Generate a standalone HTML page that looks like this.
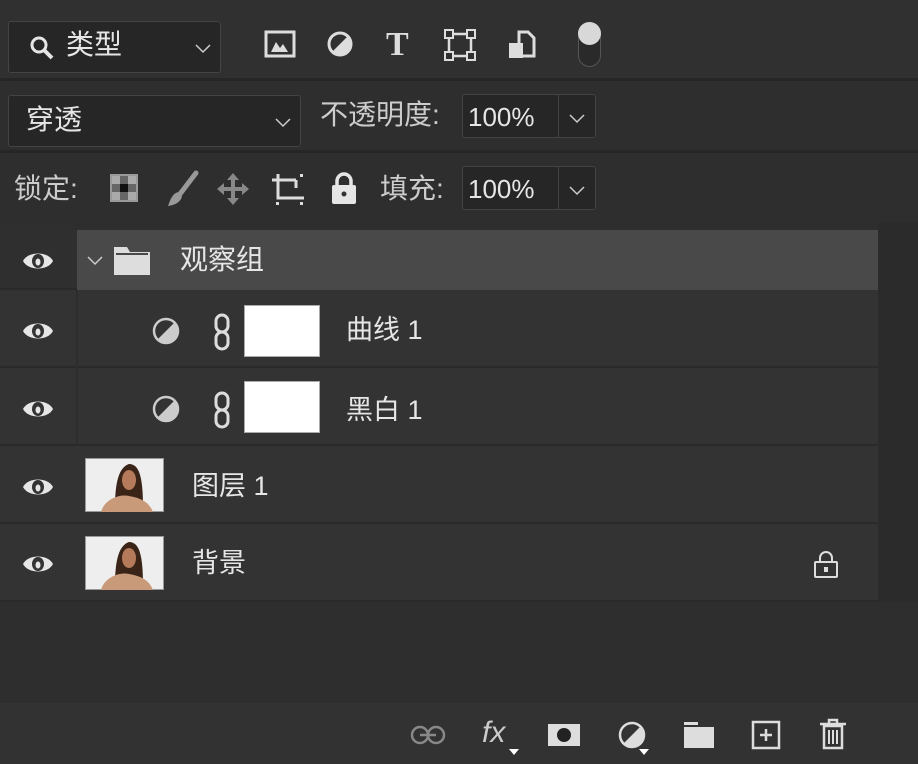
<!DOCTYPE html><html><head><meta charset="utf-8"><style>
*{margin:0;padding:0;box-sizing:border-box}
body{width:918px;height:764px;background:#2e2e2e;position:relative;overflow:hidden;font-family:"Liberation Sans","Noto Sans CJK SC",sans-serif;color:#e6e6e6}
.a{position:absolute}
.box{position:absolute;background:#262626;border:1px solid #444;border-radius:3px}
.t{position:absolute;font-size:26px;line-height:1;white-space:nowrap}
.sep{position:absolute;left:0;width:918px;height:3px;background:#262626}
.row{position:absolute;left:0;width:878px;background:#333;border-bottom:2px solid #2a2a2a}
.eye{position:absolute;left:22px;width:32px;height:22px}
.thumb{position:absolute;width:76px;height:52px;background:#fff;border:1px solid #aaa}
</style></head><body>
<div class="a" style="left:0;top:0;width:918px;height:78px;background:#303030"></div>
<div class="box" style="left:8px;top:21px;width:213px;height:52px"></div>
<svg class="a" style="left:28px;top:34px" width="28" height="28" viewBox="0 0 28 28"><circle cx="11" cy="11" r="7" fill="none" stroke="#e6e6e6" stroke-width="3"/><path d="M16 16l8 8" stroke="#e6e6e6" stroke-width="4"/></svg>
<div class="t" style="left:66px;top:31px;font-size:28px">类型</div>
<svg class="a" style="left:194px;top:42px" width="18" height="12"><path d="M2 3l7 7 7-7" fill="none" stroke="#ccc" stroke-width="1.5"/></svg>
<svg class="a" style="left:264px;top:30px" width="32" height="28"><rect x="2" y="2" width="28" height="24" fill="none" stroke="#ddd" stroke-width="3"/><path d="M7 22l5-10 4 6 3-4 5 8z" fill="#ddd"/></svg>
<svg class="a" style="left:325px;top:29px" width="30" height="30"><circle cx="15" cy="15" r="11" fill="none" stroke="#ddd" stroke-width="3"/><path d="M23 7A11 11 0 0 1 7 23z" fill="#ddd"/></svg>
<div class="t" style="left:386px;top:28px;font-family:'Liberation Serif',serif;font-weight:bold;font-size:34px;color:#ddd">T</div>
<svg class="a" style="left:444px;top:29px" width="32" height="32"><rect x="5" y="5" width="22" height="22" fill="none" stroke="#ddd" stroke-width="2.5"/><g fill="#303030" stroke="#ddd" stroke-width="2"><rect x="1" y="1" width="8" height="8"/><rect x="23" y="1" width="8" height="8"/><rect x="1" y="23" width="8" height="8"/><rect x="23" y="23" width="8" height="8"/></g></svg>
<svg class="a" style="left:507px;top:30px" width="30" height="30"><path d="M12 2h9l6 6v18H12z" fill="none" stroke="#ddd" stroke-width="3"/><rect x="2" y="13" width="14" height="15" fill="#ddd"/></svg>
<div class="a" style="left:578px;top:22px;width:23px;height:45px;border:1px solid #555;border-radius:12px;background:#2a2a2a"></div>
<div class="a" style="left:578px;top:22px;width:23px;height:23px;border-radius:50%;background:#d8d8d8"></div>
<div class="sep" style="top:78px"></div>
<div class="box" style="left:8px;top:95px;width:293px;height:52px"></div>
<div class="t" style="left:26px;top:106px;font-size:28px">穿透</div>
<svg class="a" style="left:274px;top:116px" width="18" height="12"><path d="M2 3l7 7 7-7" fill="none" stroke="#ccc" stroke-width="1.5"/></svg>
<div class="t" style="left:320px;top:101px;font-size:28px;color:#ccc">不透明度:</div>
<div class="box" style="left:462px;top:94px;width:134px;height:44px"></div>
<div class="a" style="left:558px;top:95px;width:1px;height:42px;background:#444"></div>
<div class="t" style="left:468px;top:104px">100%</div>
<svg class="a" style="left:568px;top:112px" width="18" height="12"><path d="M2 3l7 7 7-7" fill="none" stroke="#ccc" stroke-width="1.5"/></svg>
<div class="sep" style="top:150px"></div>
<div class="t" style="left:14px;top:175px;font-size:28px;color:#ccc">锁定:</div>
<svg class="a" style="left:110px;top:174px" width="28" height="28"><rect x="1" y="1" width="26" height="26" fill="#666" stroke="#999" stroke-width="2"/><g fill="#aaa"><rect x="2" y="2" width="8" height="8"/><rect x="18" y="2" width="8" height="8"/><rect x="10" y="10" width="8" height="8" fill="#111"/><rect x="2" y="18" width="8" height="8"/><rect x="18" y="18" width="8" height="8"/></g></svg>
<svg class="a" style="left:164px;top:170px" width="36" height="38"><path d="M32 3L16 24" stroke="#999" stroke-width="5" stroke-linecap="round"/><path d="M16 22c-6 0-9 5-12 14c7-1 13-4 14-10z" fill="#999"/></svg>
<svg class="a" style="left:216px;top:172px" width="34" height="34" fill="#888"><path d="M17 1l6 7h-4v7h7v-4l7 6-7 6v-4h-7v7h4l-6 7-6-7h4v-7H8v4l-7-6 7-6v4h7V8h-4z"/></svg>
<svg class="a" style="left:270px;top:172px" width="38" height="34"><path d="M8 2v24h26M2 8h24" fill="none" stroke="#ddd" stroke-width="3"/><path d="M26 8v8" stroke="#ddd" stroke-width="3"/><g fill="#ddd"><rect x="6" y="30" width="3" height="3"/><rect x="30" y="30" width="3" height="3"/><rect x="30" y="2" width="3" height="3"/></g></svg>
<svg class="a" style="left:330px;top:171px" width="28" height="34"><path d="M7 14V10a7 7 0 0 1 14 0v4" fill="none" stroke="#e6e6e6" stroke-width="3.5"/><rect x="2" y="14" width="24" height="19" rx="2" fill="#e6e6e6"/><circle cx="14" cy="23" r="2.5" fill="#333"/></svg>
<div class="t" style="left:380px;top:175px;font-size:28px;color:#ccc">填充:</div>
<div class="box" style="left:462px;top:166px;width:134px;height:44px"></div>
<div class="a" style="left:558px;top:167px;width:1px;height:42px;background:#444"></div>
<div class="t" style="left:468px;top:176px">100%</div>
<svg class="a" style="left:568px;top:184px" width="18" height="12"><path d="M2 3l7 7 7-7" fill="none" stroke="#ccc" stroke-width="1.5"/></svg>

<div class="a" style="left:878px;top:222px;width:40px;height:380px;background:#2b2b2b"></div>
<div class="row" style="top:230px;height:60px;background:#2f2f2f;width:77px"></div>
<div class="a" style="left:77px;top:230px;width:801px;height:60px;background:#494949"></div>
<div class="row" style="top:290px;height:78px"></div>
<div class="row" style="top:368px;height:78px"></div>
<div class="row" style="top:446px;height:78px"></div>
<div class="row" style="top:524px;height:78px"></div>
<div class="a" style="left:76px;top:290px;width:2px;height:156px;background:#2d2d2d"></div>

<svg class="eye" style="top:250px" viewBox="0 0 32 22"><path d="M1 11C6 1 26 1 31 11C26 21 6 21 1 11z" fill="#e6e6e6"/><ellipse cx="16" cy="11" rx="6" ry="7" fill="#333"/><ellipse cx="16" cy="12" rx="2.5" ry="3.5" fill="#e6e6e6"/></svg>
<svg class="eye" style="top:320px" viewBox="0 0 32 22"><path d="M1 11C6 1 26 1 31 11C26 21 6 21 1 11z" fill="#e6e6e6"/><ellipse cx="16" cy="11" rx="6" ry="7" fill="#333"/><ellipse cx="16" cy="12" rx="2.5" ry="3.5" fill="#e6e6e6"/></svg>
<svg class="eye" style="top:398px" viewBox="0 0 32 22"><path d="M1 11C6 1 26 1 31 11C26 21 6 21 1 11z" fill="#e6e6e6"/><ellipse cx="16" cy="11" rx="6" ry="7" fill="#333"/><ellipse cx="16" cy="12" rx="2.5" ry="3.5" fill="#e6e6e6"/></svg>
<svg class="eye" style="top:476px" viewBox="0 0 32 22"><path d="M1 11C6 1 26 1 31 11C26 21 6 21 1 11z" fill="#e6e6e6"/><ellipse cx="16" cy="11" rx="6" ry="7" fill="#333"/><ellipse cx="16" cy="12" rx="2.5" ry="3.5" fill="#e6e6e6"/></svg>
<svg class="eye" style="top:553px" viewBox="0 0 32 22"><path d="M1 11C6 1 26 1 31 11C26 21 6 21 1 11z" fill="#e6e6e6"/><ellipse cx="16" cy="11" rx="6" ry="7" fill="#333"/><ellipse cx="16" cy="12" rx="2.5" ry="3.5" fill="#e6e6e6"/></svg>

<svg class="a" style="left:86px;top:254px" width="20" height="14"><path d="M2 3l7 7 7-7" fill="none" stroke="#ccc" stroke-width="1.5"/></svg>
<svg class="a" style="left:113px;top:246px" width="38" height="30"><path d="M1 1h13l3 5h20v23H1z" fill="#ddd"/><path d="M3 8h32" stroke="#494949" stroke-width="2"/></svg>
<div class="t" style="left:180px;top:246px;font-size:28px">观察组</div>

<svg class="a" style="left:152px;top:317px" width="28" height="28"><circle cx="14" cy="14" r="12" fill="#ccc"/><path d="M22 6A11 11 0 0 0 6 22z" fill="#333"/><circle cx="14" cy="14" r="12" fill="none" stroke="#ccc" stroke-width="2.5"/></svg>
<svg class="a" style="left:212px;top:313px" width="20" height="38"><rect x="4" y="2" width="12" height="17" rx="6" fill="none" stroke="#ddd" stroke-width="3"/><rect x="4" y="19" width="12" height="17" rx="6" fill="none" stroke="#ddd" stroke-width="3"/></svg>
<div class="thumb" style="left:244px;top:305px"></div>
<div class="t" style="left:346px;top:317px;font-size:27px">曲线 1</div>

<svg class="a" style="left:152px;top:395px" width="28" height="28"><circle cx="14" cy="14" r="12" fill="#ccc"/><path d="M22 6A11 11 0 0 0 6 22z" fill="#333"/><circle cx="14" cy="14" r="12" fill="none" stroke="#ccc" stroke-width="2.5"/></svg>
<svg class="a" style="left:212px;top:391px" width="20" height="38"><rect x="4" y="2" width="12" height="17" rx="6" fill="none" stroke="#ddd" stroke-width="3"/><rect x="4" y="19" width="12" height="17" rx="6" fill="none" stroke="#ddd" stroke-width="3"/></svg>
<div class="thumb" style="left:244px;top:381px"></div>
<div class="t" style="left:346px;top:397px;font-size:27px">黑白 1</div>

<svg class="a" style="left:85px;top:458px" width="79" height="54"><rect x=".5" y=".5" width="78" height="53" fill="#eee" stroke="#999"/><path d="M30 50c0-20 2-40 14-44c10 0 14 12 14 44z" fill="#3a2418"/><ellipse cx="44" cy="22" rx="7" ry="10" fill="#b57a5a"/><path d="M16 54c4-14 20-18 28-16c12 2 20 6 24 16z" fill="#c99a7a"/></svg>
<div class="t" style="left:192px;top:473px;font-size:27px">图层 1</div>
<svg class="a" style="left:85px;top:536px" width="79" height="54"><rect x=".5" y=".5" width="78" height="53" fill="#eee" stroke="#999"/><path d="M30 50c0-20 2-40 14-44c10 0 14 12 14 44z" fill="#3a2418"/><ellipse cx="44" cy="22" rx="7" ry="10" fill="#b57a5a"/><path d="M16 54c4-14 20-18 28-16c12 2 20 6 24 16z" fill="#c99a7a"/></svg>
<div class="t" style="left:192px;top:550px;font-size:27px">背景</div>
<svg class="a" style="left:812px;top:549px" width="28" height="30"><path d="M8 13V9a6 6 0 0 1 12 0v4" fill="none" stroke="#ddd" stroke-width="2"/><rect x="3" y="13" width="22" height="15" rx="1" fill="none" stroke="#ddd" stroke-width="2"/><rect x="12" y="18" width="4" height="5" fill="#ddd"/></svg>

<div class="a" style="left:0;top:703px;width:918px;height:61px;background:#323232"></div>
<svg class="a" style="left:410px;top:723px" width="36" height="24"><rect x="2" y="4" width="16" height="16" rx="8" fill="none" stroke="#888" stroke-width="2.5"/><rect x="18" y="4" width="16" height="16" rx="8" fill="none" stroke="#888" stroke-width="2.5"/><path d="M10 12h16" stroke="#888" stroke-width="2.5"/></svg>
<div class="t" style="left:482px;top:718px;font-style:italic;font-size:30px;color:#ccc">fx</div>
<svg class="a" style="left:508px;top:748px" width="12" height="8"><path d="M1 1h10l-5 6z" fill="#fff"/></svg>
<svg class="a" style="left:547px;top:722px" width="34" height="26"><rect x="1" y="2" width="32" height="22" fill="#ddd"/><circle cx="17" cy="13" r="7" fill="#222"/></svg>
<svg class="a" style="left:617px;top:720px" width="30" height="30"><circle cx="15" cy="15" r="12" fill="#ddd"/><path d="M23 7A11 11 0 0 0 7 23z" fill="#333"/><circle cx="15" cy="15" r="12" fill="none" stroke="#ddd" stroke-width="2.5"/></svg>
<svg class="a" style="left:638px;top:748px" width="12" height="8"><path d="M1 1h10l-5 6z" fill="#fff"/></svg>
<svg class="a" style="left:683px;top:721px" width="32" height="28"><rect x="1" y="1" width="14" height="3" fill="#ddd"/><rect x="1" y="6" width="30" height="21" fill="#ddd"/></svg>
<svg class="a" style="left:751px;top:720px" width="30" height="30"><rect x="2" y="2" width="26" height="26" fill="none" stroke="#ddd" stroke-width="2.5"/><path d="M15 9v12M9 15h12" stroke="#ddd" stroke-width="2.5"/></svg>
<svg class="a" style="left:818px;top:718px" width="30" height="32"><path d="M2 6h26M11 6V2h8v4" fill="none" stroke="#ddd" stroke-width="2.5"/><rect x="6" y="8" width="18" height="22" fill="none" stroke="#ddd" stroke-width="2.5"/><path d="M11 12v14M15 12v14M19 12v14" stroke="#ddd" stroke-width="2"/></svg>
</body></html>
